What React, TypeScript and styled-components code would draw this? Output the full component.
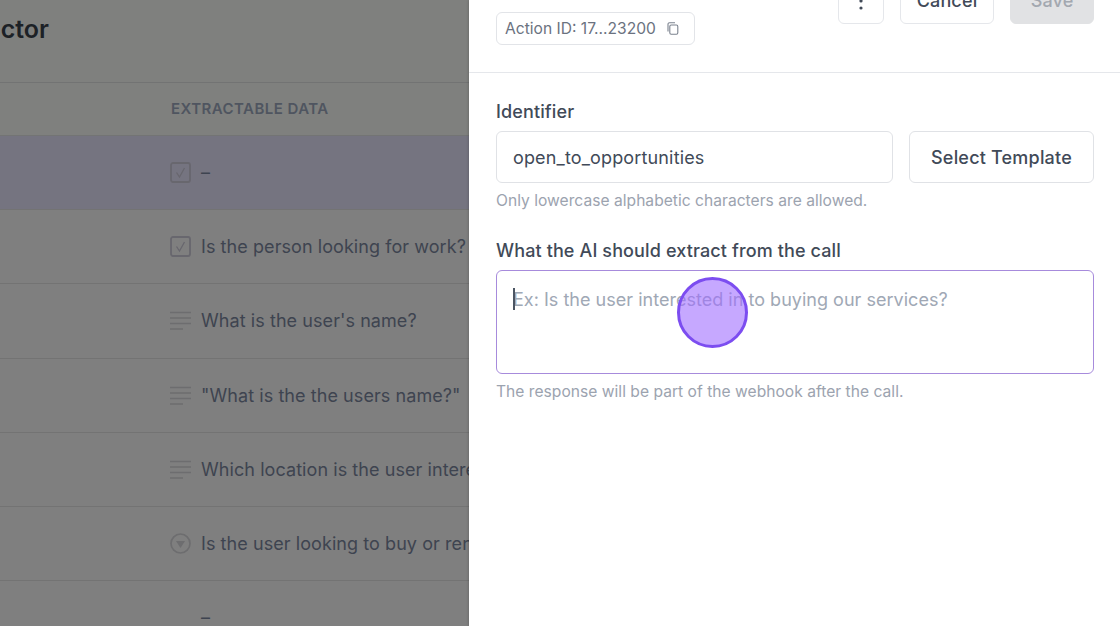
import React from "react";
import styled, { createGlobalStyle } from "styled-components";

const Global = createGlobalStyle`
  html, body { margin: 0; padding: 0; width: 100%; height: 100%; overflow: hidden; background: #fff; }
  body { font-family: Inter, "Liberation Sans", sans-serif; }
  #root { height: 100%; }
`;

const Page = styled.div`
  display: flex;
  width: 1120px;
  height: 626px;
  overflow: hidden;
`;

const Backdrop = styled.div`
  width: 469px;
  flex: none;
  background: #7f807e;
  overflow: hidden;
  display: flex;
  flex-direction: column;
`;

const TitleBar = styled.div`
  height: 83px;
  flex: none;
  border-bottom: 1px solid #727373;
  box-sizing: border-box;
  padding-top: 11px;
`;

const Title = styled.h1`
  margin: 0 0 0 -62px;
  font-size: 25px;
  line-height: 36px;
  font-weight: 600;
  color: #1c2126;
  white-space: nowrap;
`;

const HeaderRow = styled.div`
  height: 53px;
  flex: none;
  box-sizing: border-box;
  padding: 0 0 2px 171px;
  display: flex;
  align-items: center;
  border-bottom: 1px solid #737474;
  font-size: 15px;
  letter-spacing: 0.45px;
  font-weight: 600;
  color: #4f5560;
  white-space: nowrap;
`;

const Row = styled.div<{ $active?: boolean }>`
  height: 74.2px;
  flex: none;
  box-sizing: border-box;
  padding-left: 170px;
  display: flex;
  align-items: center;
  gap: 10px;
  border-bottom: 1px solid #737373;
  background: ${(p) => (p.$active ? "#757480" : "#7f7f7f")};
  font-size: 18px;
  letter-spacing: 0.07px;
  color: #3e4450;
  white-space: nowrap;
  overflow: hidden;
`;

const IconSlot = styled.span`
  width: 21px;
  height: 21px;
  flex: none;
  display: block;
`;

const Panel = styled.div`
  flex: 1;
  background: #fff;
  box-shadow: 0 0 3px rgba(0, 0, 0, 0.25);
  position: relative;
  z-index: 1;
  display: flex;
  flex-direction: column;
`;

const PanelHeader = styled.div`
  height: 73px;
  flex: none;
  box-sizing: border-box;
  border-bottom: 1px solid #e5e7eb;
  padding: 0 26px 0 27px;
  display: flex;
  justify-content: space-between;
  align-items: flex-start;
`;

const ActionChip = styled.div`
  margin-top: 12px;
  height: 33px;
  box-sizing: border-box;
  border: 1px solid #e2e4e8;
  border-radius: 6px;
  padding: 0 15px 1px 8px;
  display: flex;
  align-items: center;
  gap: 11px;
  font-size: 15.6px;
  color: #6b7280;
  white-space: nowrap;
`;

const Actions = styled.div`
  display: flex;
  gap: 16px;
  margin-top: -26px;
`;

const HeaderButton = styled.div<{ $w: number; $disabled?: boolean }>`
  width: ${(p) => p.$w}px;
  height: 50px;
  box-sizing: border-box;
  padding-top: 2px;
  border-radius: 6px;
  border: 1px solid ${(p) => (p.$disabled ? "#e1e2e4" : "#e5e7eb")};
  background: ${(p) => (p.$disabled ? "#e1e2e4" : "#fff")};
  color: ${(p) => (p.$disabled ? "#a3a8b0" : "#414a58")};
  display: flex;
  align-items: center;
  justify-content: center;
  font-size: 18px;
  letter-spacing: 0.15px;
  font-weight: 500;
`;

const Body = styled.div`
  padding: 27px 26px 0 27px;
  display: flex;
  flex-direction: column;
`;

const Label = styled.label`
  font-size: 18px;
  letter-spacing: 0.125px;
  line-height: 24px;
  font-weight: 500;
  color: #414a58;
`;

const FieldRow = styled.div`
  display: flex;
  gap: 16px;
  margin-top: 7px;
`;

const TextInput = styled.div`
  flex: 1;
  height: 52px;
  box-sizing: border-box;
  border: 1px solid #e0e2e6;
  border-radius: 6px;
  padding: 0 16px;
  display: flex;
  align-items: center;
  font-size: 18px;
  letter-spacing: 0.15px;
  color: #414a58;
`;

const TemplateButton = styled.div`
  width: 185px;
  height: 52px;
  box-sizing: border-box;
  border: 1px solid #e0e2e6;
  border-radius: 6px;
  display: flex;
  align-items: center;
  justify-content: center;
  font-size: 18px;
  letter-spacing: 0.2px;
  font-weight: 500;
  color: #414a58;
`;

const Hint = styled.p`
  margin: 7px 0 0;
  font-size: 15.6px;
  letter-spacing: 0.02px;
  line-height: 22px;
  color: #9ca3af;
  white-space: nowrap;
`;

const SecondLabel = styled(Label)`
  margin-top: 27px;
`;

const TextArea = styled.div`
  position: relative;
  margin-top: 7px;
  height: 104px;
  box-sizing: border-box;
  border: 1px solid #a78bdc;
  border-radius: 6px;
  padding: 17px 16px;
  font-size: 18px;
  letter-spacing: 0.02px;
  line-height: 24px;
  color: #a0a8b5;
  white-space: nowrap;
`;

const Caret = styled.span`
  position: absolute;
  left: 16px;
  top: 17px;
  width: 1.5px;
  height: 22px;
  background: #4b5563;
`;

const ClickRing = styled.span`
  position: absolute;
  left: 180px;
  top: 6px;
  width: 71px;
  height: 71px;
  box-sizing: border-box;
  border-radius: 50%;
  border: 3.5px solid #7c4df0;
  background: rgba(160, 110, 255, 0.6);
`;

const Check = () => (
  <svg width="21" height="21" viewBox="0 0 21 21" fill="none">
    <rect x="1" y="1" width="19" height="19" rx="2" stroke="#68676e" strokeWidth="1.8" />
    <path d="M6.5 10.5l3 4.500 5-9" stroke="#68676e" strokeWidth="1.3" />
  </svg>
);

const Lines = () => (
  <svg width="21" height="21" viewBox="0 0 21 21" fill="none" stroke="#6d6d6f" strokeWidth="1.3">
    <path d="M0 2.500h21M0 8h21M0 13.500h21M0 19h13" />
  </svg>
);

const Dropdown = () => (
  <svg width="21" height="21" viewBox="0 0 21 21" fill="none">
    <circle cx="10.5" cy="10.5" r="9.5" stroke="#6d6d6f" strokeWidth="1.7" />
    <path d="M6 8h9l-4.500 7z" fill="#6d6d6f" />
  </svg>
);

const Copy = () => (
  <svg width="12" height="13" viewBox="0 0 12 13" fill="none" stroke="#7b828e" strokeWidth="1.1">
    <rect x="2.8" y="3" width="8" height="9.2" rx="1.4" />
    <path d="M1 9.5V2.200C1 1.300 1.600.7 2.500.7H8" />
  </svg>
);

const Dots = () => (
  <svg width="4" height="24" viewBox="0 0 4 24" fill="#414a58">
    <circle cx="2" cy="6" r="1.6" />
    <circle cx="2" cy="13" r="1.6" />
    <circle cx="2" cy="20" r="1.6" />
  </svg>
);

const rows: { icon: React.ReactNode; text: string; active?: boolean }[] = [
  { icon: <Check />, text: "–", active: true },
  { icon: <Check />, text: "Is the person looking for work?" },
  { icon: <Lines />, text: "What is the user's name?" },
  { icon: <Lines />, text: '"What is the the users name?"' },
  { icon: <Lines />, text: "Which location is the user interested in?" },
  { icon: <Dropdown />, text: "Is the user looking to buy or rent?" },
  { icon: null, text: "–" },
];

export default function App() {
  return (
    <Page>
      <Global />
      <Backdrop>
        <TitleBar>
          <Title>Extractor</Title>
        </TitleBar>
        <HeaderRow>EXTRACTABLE DATA</HeaderRow>
        {rows.map((r, i) => (
          <Row key={i} $active={r.active}>
            <IconSlot>{r.icon}</IconSlot>
            {r.text}
          </Row>
        ))}
      </Backdrop>
      <Panel>
        <PanelHeader>
          <ActionChip>
            Action ID: 17...23200
            <Copy />
          </ActionChip>
          <Actions>
            <HeaderButton $w={46}>
              <Dots />
            </HeaderButton>
            <HeaderButton $w={94}>Cancel</HeaderButton>
            <HeaderButton $w={84} $disabled>
              Save
            </HeaderButton>
          </Actions>
        </PanelHeader>
        <Body>
          <Label>Identifier</Label>
          <FieldRow>
            <TextInput>open_to_opportunities</TextInput>
            <TemplateButton>Select Template</TemplateButton>
          </FieldRow>
          <Hint>Only lowercase alphabetic characters are allowed.</Hint>
          <SecondLabel>What the AI should extract from the call</SecondLabel>
          <TextArea>
            Ex: Is the user interested in to buying our services?
            <Caret />
            <ClickRing />
          </TextArea>
          <Hint>The response will be part of the webhook after the call.</Hint>
        </Body>
      </Panel>
    </Page>
  );
}
